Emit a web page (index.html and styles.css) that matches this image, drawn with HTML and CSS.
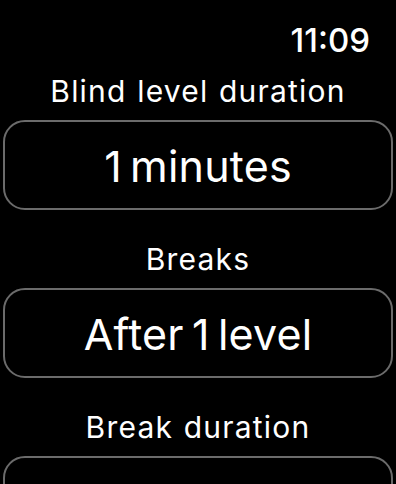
FILE: index.html
```html
<!DOCTYPE html>
<html>
<head>
<meta charset="utf-8">
<link rel="stylesheet" href="styles.css">
</head>
<body>
<div class="screen">
  <div class="status"><span class="time">11:09</span></div>
  <div class="list">
    <div class="group">
      <div class="label">Blind level duration</div>
      <div class="picker">1 minutes</div>
    </div>
    <div class="group">
      <div class="label">Breaks</div>
      <div class="picker">After 1 level</div>
    </div>
    <div class="group">
      <div class="label">Break duration</div>
      <div class="picker">10 minutes</div>
    </div>
  </div>
</div>
</body>
</html>
```
FILE: styles.css
```css
html, body {
  margin: 0;
  padding: 0;
  background: #000;
}
body {
  font-family: Inter, "Noto Sans", sans-serif;
  color: #fff;
  overflow: hidden;
  height: 484px;
}
.screen {
  width: 396px;
  height: 484px;
  overflow: hidden;
}
.status {
  display: flex;
  justify-content: flex-end;
  padding: 20px 26px 0 0;
  height: 40px;
}
.time {
  font-size: 33px;
  line-height: 40px;
  font-weight: 500;
}
.list {
  display: flex;
  flex-direction: column;
  gap: 31px;
  padding: 13px 3px 0 3px;
}
.group {
  display: flex;
  flex-direction: column;
  gap: 11px;
}
.label {
  text-align: center;
  font-size: 30px;
  line-height: 36px;
  letter-spacing: 1.2px;
  word-spacing: 1px;
}
.picker {
  box-sizing: border-box;
  height: 90px;
  border: 2px solid #6b6b6b;
  border-radius: 22px;
  display: flex;
  align-items: center;
  justify-content: center;
  font-size: 43px;
  line-height: 52px;
  padding-top: 2px;
  letter-spacing: 0.2px;
  word-spacing: -4px;
}
```
